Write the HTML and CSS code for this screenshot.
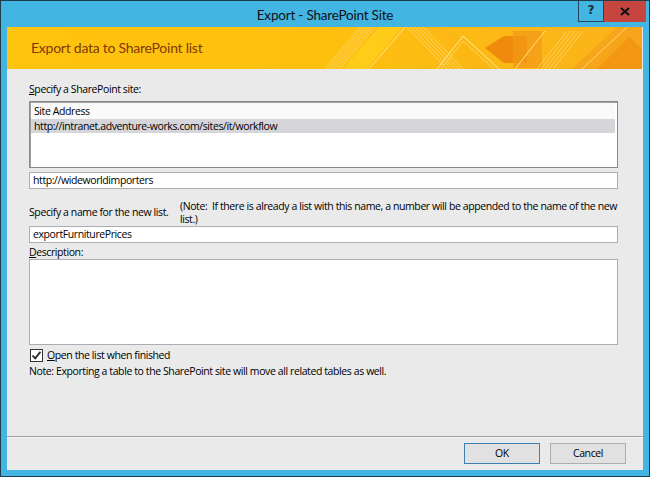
FILE: index.html
```html
<!DOCTYPE html>
<html>
<head>
<meta charset="utf-8">
<link rel="stylesheet" href="styles.css">
</head>
<body>
<div class="window">
  <div class="titlebar">
    <div class="tb-side"></div>
    <div class="title">Export - SharePoint Site</div>
    <div class="tb-side tb-buttons">
      <div class="btn-help">?</div>
      <div class="btn-close">
        <svg width="10" height="9" viewBox="0 0 10 9"><path d="M1 1 L9 8 M9 1 L1 8" stroke="#111" stroke-width="2.2"/></svg>
      </div>
    </div>
  </div>
  <div class="client">
    <div class="banner">
      <svg class="banner-art" width="635" height="42" viewBox="0 0 635 42">
        <defs>
          <linearGradient id="bg" x1="0" y1="0" x2="1" y2="0">
            <stop offset="0" stop-color="#FFC40E"/>
            <stop offset="0.5" stop-color="#FEC00F"/>
            <stop offset="1" stop-color="#FAB21A"/>
          </linearGradient>
        </defs>
        <rect width="635" height="42" fill="url(#bg)"/>
        <g stroke="#FFE28A" stroke-width="0.8" opacity="0.8">
          <line x1="318" y1="42" x2="353" y2="0"/>
          <line x1="321" y1="42" x2="356" y2="0"/>
          <line x1="324" y1="42" x2="359" y2="0"/>
          <line x1="327" y1="42" x2="362" y2="0"/>
          <line x1="330" y1="42" x2="365" y2="0"/>
          <line x1="333" y1="42" x2="368" y2="0"/>
        </g>
        <polygon points="336,42 372,0 395,0 360,42" fill="#FFD21E" opacity="0.7"/>
        <line x1="362" y1="42" x2="398" y2="0" stroke="#FFF3B0" stroke-width="1" opacity="0.8"/>
        <g stroke="#FFE08A" stroke-width="0.8" opacity="0.8">
          <line x1="400" y1="0" x2="440" y2="42"/>
          <line x1="404" y1="0" x2="444" y2="42"/>
          <line x1="408" y1="0" x2="448" y2="42"/>
          <line x1="412" y1="0" x2="452" y2="42"/>
          <line x1="416" y1="0" x2="456" y2="42"/>
        </g>
        <polygon points="420,0 440,0 485,42 465,42" fill="#FCB515" opacity="0.6"/>
        <polyline points="430,42 456,9 492,42" fill="none" stroke="#FFE9A0" stroke-width="1"/>
        <polyline points="434,42 456,14 487,42" fill="none" stroke="#FFE9A0" stroke-width="0.7" opacity="0.7"/>
        <polygon points="506,4 535,4 535,41 506,41" fill="#F6A218"/>
        <polygon points="478,21 497,9 506,9 506,36 497,36" fill="#EF8A0C"/>
        <polygon points="506,9 520,9 520,36 506,36" fill="#F29510"/>
        <line x1="508" y1="42" x2="538" y2="4" stroke="#FFE28A" stroke-width="1"/>
        <g stroke="#FFE08A" stroke-width="0.8" opacity="0.8">
          <line x1="530" y1="42" x2="560" y2="4"/>
          <line x1="534" y1="42" x2="564" y2="4"/>
          <line x1="538" y1="42" x2="568" y2="4"/>
          <line x1="542" y1="42" x2="572" y2="4"/>
          <line x1="546" y1="42" x2="576" y2="4"/>
        </g>
        <polygon points="565,42 610,0 635,0 635,42" fill="#F6A41C" opacity="0.9"/>
        <polygon points="590,42 622,10 635,22 635,42" fill="#F39612"/>
        <line x1="575" y1="42" x2="620" y2="0" stroke="#FFE28A" stroke-width="1" opacity="0.8"/>
      </svg>
      <div class="banner-text">Export data to SharePoint list</div>
    </div>
    <div class="content">
      <div class="label lbl-site"><u>S</u>pecify a SharePoint site:</div>
      <div class="listbox">
        <div class="lb-head">Site Address</div>
        <div class="lb-row selected">http://intranet.adventure-works.com/sites/it/workflow</div>
      </div>
      <div class="input input-site">http://wideworldimporters</div>
      <div class="name-row">
        <div class="label">Specify a name for the new list.</div>
        <div class="note">(Note:&nbsp; If there is already a list with this name, a number will be appended to the name of the new list.)</div>
      </div>
      <div class="input">exportFurniturePrices</div>
      <div class="label lbl-desc"><u>D</u>escription:</div>
      <div class="textarea"></div>
      <div class="check-row">
        <div class="checkbox">
          <svg width="11" height="11" viewBox="0 0 11 11"><path d="M1.5 5.5 L4.2 8.3 L9.5 1.8" fill="none" stroke="#222" stroke-width="1.8"/></svg>
        </div>
        <div class="label"><u>O</u>pen the list when finished</div>
      </div>
      <div class="label footnote">Note: Exporting a table to the SharePoint site will move all related tables as well.</div>
    </div>
    <div class="footer">
      <div class="button default">OK</div>
      <div class="button">Cancel</div>
    </div>
  </div>
</div>
</body>
</html>
```
FILE: styles.css
```css
* { box-sizing: border-box; }
html, body { margin: 0; padding: 0; }
body {
  width: 650px;
  height: 477px;
  overflow: hidden;
  font-family: "Open Sans", "Noto Sans", sans-serif;
  font-size: 10.5px;
  letter-spacing: -0.4px;
  color: #000;
}
.window {
  width: 650px;
  height: 477px;
  background: #42B5E2;
  border: 1px solid #1D3C4C;
  padding: 0 6px 6px 6px;
  display: flex;
  flex-direction: column;
}
.titlebar {
  height: 26px;
  display: grid;
  grid-template-columns: 1fr auto 1fr;
  align-items: start;
}
.title {
  font-family: Lato, "Open Sans", sans-serif;
  font-size: 13.5px;
  letter-spacing: -0.2px;
  line-height: 28px;
  color: #111;
}
.tb-buttons {
  display: flex;
  justify-content: flex-end;
  margin-right: -3px;
}
.btn-help {
  width: 26px;
  height: 21px;
  border: 1px solid #23465A;
  border-top: none;
  font-weight: bold;
  font-size: 12px;
  letter-spacing: 0;
  color: #1B2B38;
  text-align: center;
  line-height: 19px;
  font-family: "DejaVu Sans", sans-serif;
}
.btn-close {
  width: 42px;
  height: 21px;
  background: #C6453E;
  display: flex;
  align-items: center;
  justify-content: center;
}
.client {
  flex: 1;
  background: #EAEAEA;
  display: flex;
  flex-direction: column;
}
.banner {
  height: 42px;
  position: relative;
  display: flex;
  align-items: center;
}
.banner-art {
  position: absolute;
  left: 0;
  top: 0;
}
.banner-text {
  position: relative;
  margin-left: 24px;
  font-family: Lato, "Open Sans", sans-serif;
  font-size: 14px;
  letter-spacing: -0.25px;
  color: #7E3A05;
  margin-top: -1px;
}
.content {
  flex: 1;
  padding: 13px 25px 0 22px;
  display: flex;
  flex-direction: column;
}
.label { line-height: 14px; }
.lbl-site { margin-bottom: 5px; }
.listbox {
  height: 67px;
  background: #fff;
  border: 1px solid #8A8A8A;
  box-shadow: inset 1px 1px 0 #A0A0A0;
  padding: 1px 2px 0 1px;
}
.lb-head {
  height: 16px;
  line-height: 16px;
  background: #FAFAFA;
  padding-left: 3px;
}
.lb-row {
  height: 14px;
  line-height: 14px;
  padding-left: 3px;
}
.lb-row.selected { background: #D6D6DA; }
.input {
  height: 17px;
  background: #fff;
  border: 1px solid #ABADB3;
  line-height: 15px;
  padding-left: 3px;
}
.input-site { margin-top: 4px; }
.name-row {
  display: flex;
  margin-top: 11px;
  align-items: flex-start;
}
.name-row .label { width: 151px; margin-top: 5px; flex: none; white-space: nowrap; }
.note { flex: 1; line-height: 13px; }
.lbl-desc { margin-top: 2px; }
.textarea {
  height: 86px;
  background: #fff;
  border: 1px solid #ABADB3;
}
.check-row {
  display: flex;
  align-items: center;
  margin-top: 3px;
  gap: 4px;
}
.checkbox {
  width: 13px;
  height: 13px;
  margin-left: 1px;
  border: 1px solid #333;
  background: #fff;
  display: flex;
  align-items: center;
  justify-content: center;
}
.footnote { margin-top: 2px; }
.footer {
  height: 34px;
  border-top: 1px solid #A0A0A0;
  box-shadow: inset 0 1px 0 #F6F6F6;
  display: flex;
  justify-content: flex-end;
  align-items: flex-start;
  padding: 6px 17px 0 0;
  gap: 10px;
}
.button {
  width: 76px;
  height: 21px;
  background: #E1E1E1;
  border: 1px solid #ADADAD;
  text-align: center;
  line-height: 19px;
}
.button.default { border-color: #3C7FB1; }
```
